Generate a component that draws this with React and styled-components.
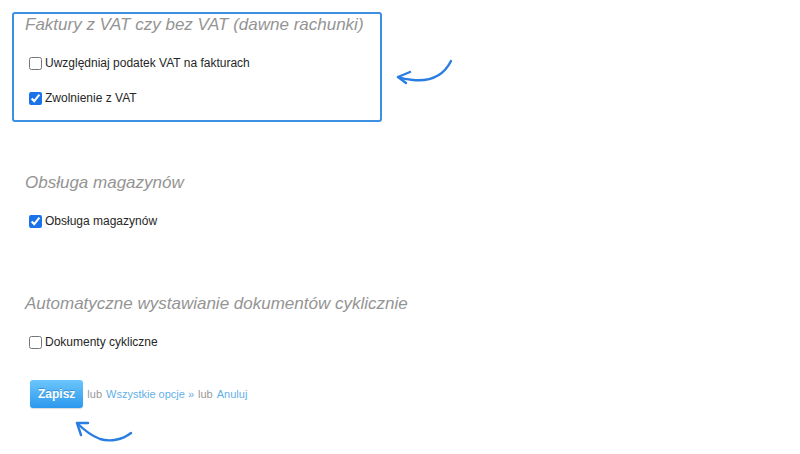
import React from 'react'
import styled, { createGlobalStyle } from 'styled-components'

const GlobalStyle = createGlobalStyle`
  html, body {
    margin: 0;
    padding: 0;
    background: #fff;
  }
  body {
    font-family: 'Liberation Sans', Arial, sans-serif;
  }
`

const Page = styled.div`
  position: relative;
  width: 800px;
  height: 454px;
  padding: 12px 0 0 12px;
  box-sizing: border-box;
  overflow: hidden;
`

const Section = styled.div`
  width: 370px;
  box-sizing: border-box;
  border: 2px solid ${p => (p.$highlight ? '#3d8fe2' : 'transparent')};
  border-radius: 3px;
  padding: 0 11px 12px;
  margin-top: ${p => p.$gap || 0}px;
`

const Title = styled.div`
  font-style: italic;
  font-size: 17px;
  line-height: 22px;
  color: #949494;
  white-space: nowrap;
  margin-bottom: 17px;
`

const Rows = styled.div`
  display: flex;
  flex-direction: column;
  gap: 15px;
`

const Row = styled.label`
  display: flex;
  align-items: center;
  height: 20px;
  font-size: 12px;
  color: #262626;
  white-space: nowrap;
  input {
    width: 13px;
    height: 13px;
    margin: 0 3px 0 4px;
    accent-color: #1a73e8;
  }
`

const Actions = styled.div`
  display: flex;
  align-items: center;
  margin: 14px 0 0 18px;
  font-size: 11px;
  color: #999;
  gap: 4px;
`

const SaveButton = styled.button`
  height: 28px;
  padding: 0 8px;
  border: none;
  border-radius: 3px;
  background: linear-gradient(#6cc6fb, #2b98ee);
  box-shadow: 0 1px 1px rgba(0, 0, 0, 0.15);
  color: #fff;
  font-family: 'Liberation Sans', Arial, sans-serif;
  font-weight: bold;
  font-size: 12px;
  text-shadow: 0 -1px 0 rgba(0, 60, 120, 0.3);
`

const Link = styled.a`
  color: #5fb0e8;
  text-decoration: none;
`

const Note = styled.svg`
  position: absolute;
  left: ${p => p.$x}px;
  top: ${p => p.$y}px;
  overflow: visible;
`

const Checkbox = ({ label, checked }) => (
  <Row>
    <input type="checkbox" defaultChecked={checked} />
    {label}
  </Row>
)

const App = () => (
  <Page>
    <GlobalStyle />
    <Section $highlight>
      <Title>Faktury z VAT czy bez VAT (dawne rachunki)</Title>
      <Rows>
        <Checkbox label="Uwzględniaj podatek VAT na fakturach" />
        <Checkbox label="Zwolnienie z VAT" checked />
      </Rows>
    </Section>

    <Section $gap={48}>
      <Title>Obsługa magazynów</Title>
      <Checkbox label="Obsługa magazynów" checked />
    </Section>

    <Section $gap={46}>
      <Title>Automatyczne wystawianie dokumentów cyklicznie</Title>
      <Checkbox label="Dokumenty cykliczne" />
    </Section>

    <Actions>
      <SaveButton>Zapisz</SaveButton>
      <span>lub</span>
      <Link href="#">Wszystkie opcje »</Link>
      <span>lub</span>
      <Link href="#">Anuluj</Link>
    </Actions>

    <Note $x={390} $y={50} width="70" height="40" viewBox="0 0 70 40">
      <g fill="none" stroke="#2a7de1" strokeWidth="2.4" strokeLinecap="round" strokeLinejoin="round">
        <path d="M61 11 C55 23 44 32 23 30 C17 29.5 12 28.5 8 27" />
        <path d="M20 22 L8 27 L16 33" />
      </g>
    </Note>
    <Note $x={70} $y={415} width="70" height="35" viewBox="0 0 70 35">
      <g fill="none" stroke="#2a7de1" strokeWidth="2.4" strokeLinecap="round" strokeLinejoin="round">
        <path d="M61 18 C52 25 40 27 30 24 C22 21 15 16 7 8" />
        <path d="M18 8 L7 8 L11 20" />
      </g>
    </Note>
  </Page>
)

export default App
